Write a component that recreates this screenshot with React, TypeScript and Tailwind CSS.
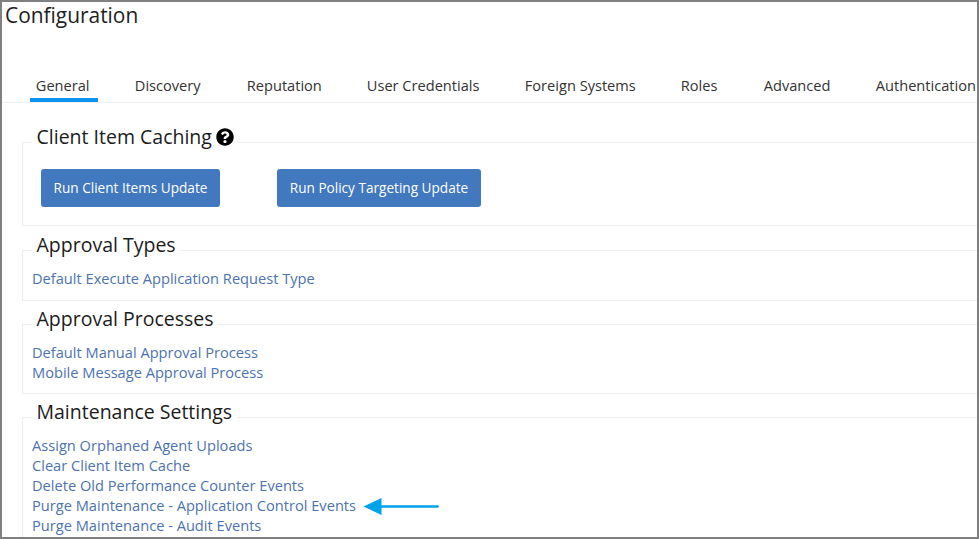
import React from "react";

const tabs = [
  { label: "General", w: "w-[54px]", ml: "ml-0" },
  { label: "Discovery", w: "w-[67px]", ml: "ml-[45px]" },
  { label: "Reputation", w: "w-[76px]", ml: "ml-[45px]" },
  { label: "User Credentials", w: "w-[113px]", ml: "ml-[44px]" },
  { label: "Foreign Systems", w: "w-[112px]", ml: "ml-[45px]" },
  { label: "Roles", w: "w-[38px]", ml: "ml-[44px]" },
  { label: "Advanced", w: "w-[67px]", ml: "ml-[45px]" },
  { label: "Authentication", w: "w-[100px]", ml: "ml-[45px]" },
];

function Section({ title, className, icon, children }: { title: string; className: string; icon?: React.ReactNode; children: React.ReactNode }) {
  return (
    <section className={`ml-[20px] shrink-0 border border-r-0 border-[#ebeff2] ${className}`}>
      <h2 className="-mt-[20px] ml-[9px] flex h-[28px] w-fit items-center gap-[4px] bg-white px-[4.5px] text-[19.5px] leading-[28px] text-[#1c1c1c]">
        {title}
        {icon}
      </h2>
      {children}
    </section>
  );
}

function Links({ items }: { items: string[] }) {
  return (
    <ul className="mt-[9px] pl-[9px] text-[14.63px] leading-[20px] text-[#4d73b0]">
      {items.map((t) => (
        <li key={t} className="flex h-[20px] items-center whitespace-nowrap">
          <a>{t}</a>
          {t.includes("Application Control") && (
            <svg className="mt-[2px] ml-[7px]" width="76" height="18" viewBox="0 0 76 18">
              <path d="M16 9.500H74.500" stroke="#00a2e8" strokeWidth="2.500" strokeLinecap="round" />
              <path d="M0.500 9.500L18.500 1V18Z" fill="#00a2e8" />
            </svg>
          )}
        </li>
      ))}
    </ul>
  );
}

export default function App() {
  return (
    <main className="flex h-[539px] w-[979px] flex-col overflow-hidden border-2 border-[#808080] bg-white font-['Open_Sans',sans-serif] text-[#222]">
      <h1 className="ml-[3px] h-[66px] shrink-0 text-[20.9px] leading-[27px]">Configuration</h1>
      <nav className="flex h-[35px] shrink-0 border-b border-[#ebeff2] pl-[34px] text-[14.6px] leading-[34px] text-[#333]">
        {tabs.map((t, i) => (
          <div key={t.label} className={`shrink-0 whitespace-nowrap ${t.w} ${t.ml}`}>
            <span className="-ml-[0.2px]">{t.label}</span>
            {i === 0 && <div className="-mt-[4px] -ml-[6px] h-[4px] w-[68px] bg-[#0b93ee]" />}
          </div>
        ))}
      </nav>
      <Section
        title="Client Item Caching"
        className="mt-[39px] h-[84px]"
        icon={
          <svg width="18" height="18" viewBox="0 0 512 512">
            <path d="M504 256c0 137-111 248-248 248S8 393 8 256 119 8 256 8s248 111 248 248zM262.700 90c-54.500 0-89.300 23-116.500 63.800-3.600 5.300-2.400 12.500 2.700 16.400l34.700 26.300c5.200 3.900 12.600 3 16.700-2.100 17.900-22.700 30.100-35.800 57.300-35.800 20.400 0 45.700 13.100 45.700 33 0 15-12.400 22.700-32.500 34C247.100 238.500 216 254.900 216 296v4c0 6.600 5.400 12 12 12h56c6.600 0 12-5.400 12-12v-1.300c0-28.500 83.200-29.600 83.200-106.700 0-58-60.200-102-116.500-102zM256 338c-25.400 0-46 20.600-46 46s20.600 46 46 46 46-20.600 46-46-20.600-46-46-46z" fill="#000" />
          </svg>
        }
      >
        <div className="mt-[18px] ml-[18px] flex gap-[57px] text-[13.6px] text-white">
          <button className="h-[38px] w-[179px] rounded-[3px] bg-[#4178be]">Run Client Items Update</button>
          <button className="h-[38px] w-[204px] rounded-[3px] bg-[#4178be]">Run Policy Targeting Update</button>
        </div>
      </Section>
      <Section title="Approval Types" className="mt-[24px] h-[51px]">
        <Links items={["Default Execute Application Request Type"]} />
      </Section>
      <Section title="Approval Processes" className="mt-[23px] h-[70px]">
        <Links items={["Default Manual Approval Process", "Mobile Message Approval Process"]} />
      </Section>
      <Section title="Maintenance Settings" className="mt-[23px] h-[140px]">
        <Links items={["Assign Orphaned Agent Uploads", "Clear Client Item Cache", "Delete Old Performance Counter Events", "Purge Maintenance - Application Control Events", "Purge Maintenance - Audit Events"]} />
      </Section>
    </main>
  );
}
